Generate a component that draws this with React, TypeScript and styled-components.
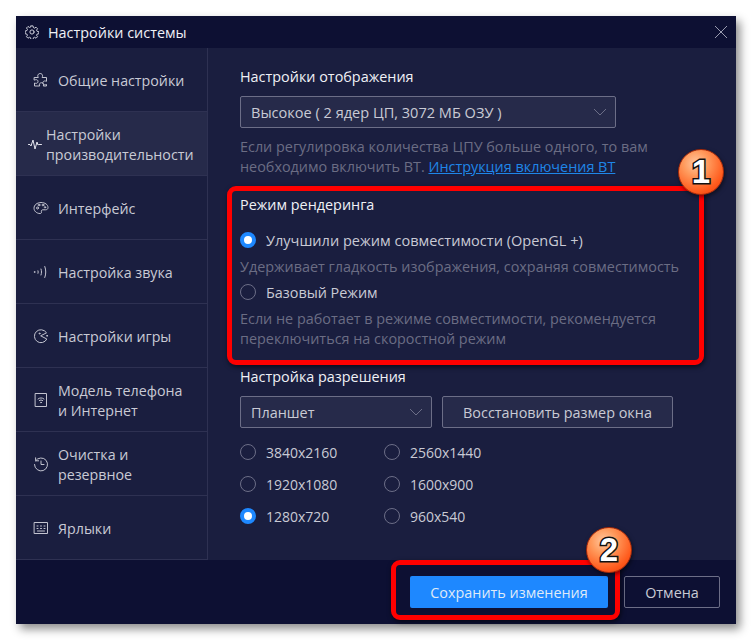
import React from "react";
import styled, { createGlobalStyle } from "styled-components";

const Global = createGlobalStyle`
  html, body { margin: 0; padding: 0; background: #fff; }
  body { font-family: "Open Sans", "Noto Sans", sans-serif; }
  * { box-sizing: border-box; }
`;

const Page = styled.div`
  position: relative;
  width: 752px;
  height: 640px;
  padding: 16px;
  overflow: hidden;
  background: #fff;
`;
const Win = styled.div`
  width: 720px;
  height: 608px;
  display: flex;
  flex-direction: column;
  background: #1a1e3f;
  box-shadow: 4px 5px 9px rgba(0, 0, 0, 0.45);
`;
const TitleBar = styled.div`
  height: 32px;
  flex: none;
  display: flex;
  align-items: center;
  padding: 0 9px;
  gap: 9px;
  background: #0d1033;
  color: #f0f1f6;
  font-size: 14.4px;
`;
const TitleText = styled.span`
  flex: 1;
`;
const Body = styled.div`
  flex: 1;
  display: flex;
  min-height: 0;
`;
const Side = styled.div`
  width: 192px;
  flex: none;
  border-right: 1px solid #2e3152;
  display: flex;
  flex-direction: column;
`;
const NavItem = styled.div<{ $active?: boolean; $tight?: boolean }>`
  height: 64px;
  flex: none;
  display: flex;
  align-items: center;
  gap: ${(p) => (p.$tight ? "3px" : "9px")};
  padding-left: ${(p) => (p.$tight ? "11px" : "17px")};
  border-bottom: 1px solid #2e3152;
  background: ${(p) => (p.$active ? "#262a4a" : "transparent")};
  color: #c9cad5;
  font-size: 14.25px;
  line-height: 20px;
  svg { flex: none; }
`;
const NavLabel = styled.span`
  display: block;
  padding-top: 2px;
`;
const Main = styled.div`
  flex: 1;
  padding: 19px 0 0 32px;
  display: flex;
  flex-direction: column;
  align-items: flex-start;
`;
const H = styled.div<{ $mt?: number }>`
  font-size: 14.4px;
  line-height: 20px;
  color: #f0f1f6;
  margin-top: ${(p) => p.$mt ?? 0}px;
`;
const Select = styled.div<{ $w: number; $mt?: number; $fs?: number }>`
  width: ${(p) => p.$w}px;
  height: 32px;
  flex: none;
  margin-top: ${(p) => p.$mt ?? 0}px;
  display: flex;
  align-items: center;
  justify-content: space-between;
  padding: 0 8px 0 10px;
  background: #262a4a;
  border: 1px solid #6c6e87;
  border-radius: 2px;
  color: #c9cad5;
  font-size: ${(p) => p.$fs ?? 14.4}px;
`;
const Hint = styled.div<{ $mt?: number }>`
  font-size: 14.4px;
  line-height: 20px;
  color: #6b6d84;
  margin-top: ${(p) => p.$mt ?? 0}px;
  white-space: nowrap;
`;
const DocLink = styled.a`
  color: #1f86e8;
  text-decoration: underline;
`;
const RadioRow = styled.div<{ $mt?: number; $fs?: number }>`
  display: flex;
  align-items: center;
  gap: 10px;
  height: 20px;
  margin-top: ${(p) => p.$mt ?? 0}px;
  color: #c9cad5;
  font-size: ${(p) => p.$fs ?? 14.4}px;
  white-space: nowrap;
`;
const Dot = styled.span<{ $on?: boolean }>`
  width: 16px;
  height: 16px;
  flex: none;
  border-radius: 50%;
  ${(p) =>
    p.$on
      ? "background:#fff;border:4px solid #1e88ff;"
      : "border:1px solid #6c6e87;"}
`;
const Row = styled.div`
  display: flex;
  gap: 10px;
  margin-top: 9px;
`;
const RestoreBtn = styled.div`
  width: 231px;
  height: 32px;
  display: flex;
  align-items: center;
  justify-content: center;
  background: #262a4a;
  border: 1px solid #6c6e87;
  border-radius: 2px;
  color: #c9cad5;
  font-size: 14.4px;
`;
const ResGrid = styled.div`
  display: grid;
  grid-template-columns: 144px 144px;
  grid-auto-rows: 20px;
  row-gap: 12px;
  margin-top: 14px;
`;
const Footer = styled.div`
  height: 64px;
  flex: none;
  background: #0d1033;
  display: flex;
  align-items: center;
  justify-content: flex-end;
  gap: 16px;
  padding-right: 16px;
`;
const Save = styled.div`
  width: 198px;
  height: 32px;
  display: flex;
  align-items: center;
  justify-content: center;
  background: #1e88ff;
  border-radius: 2px;
  color: #dfeaf8;
  font-size: 14.4px;
`;
const Cancel = styled.div`
  width: 96px;
  height: 32px;
  display: flex;
  align-items: center;
  justify-content: center;
  border: 1px solid #6c6e87;
  border-radius: 2px;
  color: #c9cad5;
  font-size: 14.4px;
`;
const RedBox = styled.div<{ $x: number; $y: number; $w: number; $h: number }>`
  position: absolute;
  left: ${(p) => p.$x}px;
  top: ${(p) => p.$y}px;
  width: ${(p) => p.$w}px;
  height: ${(p) => p.$h}px;
  border: 5px solid #ff0000;
  border-radius: 9px;
  box-shadow: 1px 2px 5px rgba(0, 0, 0, 0.6);
`;
const Badge = styled.div<{ $x: number; $y: number }>`
  position: absolute;
  left: ${(p) => p.$x}px;
  top: ${(p) => p.$y}px;
  width: 46px;
  height: 46px;
  border-radius: 50%;
  border: 1px solid #a82a08;
  background: radial-gradient(circle at 38% 30%, #ffc7a0 0%, #ff9a5c 30%, #ff5a1c 70%, #e83a08 100%);
  box-shadow: 1px 2px 4px rgba(0, 0, 0, 0.5);
  display: flex;
  align-items: center;
  justify-content: center;
  font-family: "Liberation Sans", sans-serif;
  font-weight: 700;
  font-size: 33px;
  color: #fff;
  -webkit-text-stroke: 3px #111;
  paint-order: stroke fill;
`;

const Svg = (p: { children: React.ReactNode; s?: number; c?: string }) => (
  <svg width={p.s ?? 16} height={p.s ?? 16} viewBox="0 0 16 16" fill="none" stroke={p.c ?? "#c3c4d0"} strokeWidth="1" strokeLinecap="round" strokeLinejoin="round">
    {p.children}
  </svg>
);
const Gear = () => (
  <Svg s={14} c="#e4e5ee">
    <circle cx="8" cy="8" r="2.4" />
    <path d="M6.8 1h2.4l.4 2 1.3.6 1.700-1.100 1.700 1.700-1.100 1.700.6 1.300 2 .4v2.400l-2 .4-.6 1.300 1.100 1.700-1.700 1.700-1.700-1.100-1.300.6-.4 2H6.800l-.4-2-1.300-.6-1.700 1.100-1.700-1.700 1.100-1.700-.6-1.300-2-.4V6.800l2-.4.6-1.300-1.100-1.700 1.700-1.700 1.700 1.100 1.300-.6z" />
  </Svg>
);
const Puzzle = () => (
  <Svg>
    <path d="M1.500 5.500h3.800l-.5-1.300C4.400 2.800 5.800 1.500 7.200 1.500c1.500 0 2.700 1.300 2.300 2.800l-.4 1.200h4.400v3.800l-1.200-.3c-1.300-.3-2.500.6-2.500 1.900s1.200 2.200 2.500 1.900l1.200-.3v1.500H10.300l.3-1c.3-1.200-.7-2.300-2.100-2.300s-2.400 1.100-2.100 2.300l.3 1H1.500V11l1.200.3C4 11.600 5 10.700 5 9.500S4 7.400 2.700 7.700L1.500 8z" />
  </Svg>
);
const Pulse = () => (
  <Svg s={16} c="#e4e5ee">
    <path d="M1.500 8.500h1.500l1 1.500 2-6 2 9 2-7 1 3 .7-.5H14.500" />
  </Svg>
);
const Palette = () => (
  <Svg>
    <path d="M8 2.500C4 2.500 1 5 1 8.200c0 3 2.800 5.300 6 5.300 1.300 0 1.700-.8 1.400-1.700-.4-1 .2-2 1.400-2h2.700c1.500 0 2.500-.8 2.500-2.200 0-3-3-5.100-6.500-5.100z" />
    <circle cx="4.500" cy="8" r="1" />
    <circle cx="6" cy="5" r=".9" />
    <circle cx="10" cy="5" r=".9" />
    <circle cx="12" cy="7.300" r=".7" />
  </Svg>
);
const Sound = () => (
  <Svg>
    <circle cx="1.500" cy="8" r=".4" />
    <path d="M5 6.800c.3.800.3 1.700 0 2.500" />
    <path d="M8 5c.7 2 .7 4 0 6" />
    <path d="M11.800 2.500c1.300 3.500 1.300 7.500 0 11" />
  </Svg>
);
const Game = () => (
  <Svg>
    <path d="M13.300 4.500A6.500 6.500 0 1 0 13.800 11L8 8z" />
    <circle cx="6.500" cy="5.500" r=".5" />
    <circle cx="14" cy="7.800" r=".5" />
  </Svg>
);
const Phone = () => (
  <Svg>
    <rect x="2.500" y="1.500" width="11" height="13" />
    <path d="M5 7c1.800-1.500 4.200-1.500 6 0" />
    <path d="M6.300 8.600c1-.8 2.400-.8 3.400 0" />
    <circle cx="8" cy="10.500" r=".4" />
  </Svg>
);
const Hist = () => (
  <Svg>
    <path d="M2.600 4.800A6.500 6.500 0 1 1 1.500 8.500" />
    <path d="M2.600 1.800v3h3" />
    <path d="M8 5v3.500h3" />
  </Svg>
);
const Keys = () => (
  <Svg>
    <rect x="1.500" y="2.500" width="13" height="11" />
    <path d="M4 6h1M7.500 6h1M11 6h1M4 8.500h1M7.500 8.500h1M11 8.500h1M4.500 11h7" />
  </Svg>
);
const Chevron = () => (
  <svg width="14" height="8" viewBox="0 0 14 8" fill="none" stroke="#6c6e87" strokeWidth="1">
    <path d="M1 1l6 6 6-6" />
  </svg>
);
const CloseX = () => (
  <svg width="12" height="12" viewBox="0 0 12 12" fill="none" stroke="#9a9cb0" strokeWidth="1">
    <path d="M0 0l12 12M12 0L0 12" />
  </svg>
);

const nav: { icon: React.ReactNode; label: React.ReactNode; active?: boolean; tight?: boolean }[] = [
  { icon: <Puzzle />, label: "Общие настройки" },
  { icon: <Pulse />, label: <>Настройки<br />производительности</>, active: true, tight: true },
  { icon: <Palette />, label: "Интерфейс" },
  { icon: <Sound />, label: "Настройка звука" },
  { icon: <Game />, label: "Настройки игры" },
  { icon: <Phone />, label: <>Модель телефона<br />и Интернет</> },
  { icon: <Hist />, label: <>Очистка и<br />резервное</> },
  { icon: <Keys />, label: "Ярлыки" },
];
const res = [
  ["3840x2160", false],
  ["2560x1440", false],
  ["1920x1080", false],
  ["1600x900", false],
  ["1280x720", true],
  ["960x540", false],
] as const;

export default function App() {
  return (
    <Page>
      <Global />
      <Win>
        <TitleBar>
          <Gear />
          <TitleText>Настройки системы</TitleText>
          <CloseX />
        </TitleBar>
        <Body>
          <Side>
            {nav.map((n, i) => (
              <NavItem key={i} $active={n.active} $tight={n.tight}>
                {n.icon}
                <NavLabel>{n.label}</NavLabel>
              </NavItem>
            ))}
          </Side>
          <Main>
            <H>Настройки отображения</H>
            <Select $w={376} $mt={9} $fs={14.55}>
              Высокое ( 2 ядер ЦП, 3072 МБ ОЗУ )
              <Chevron />
            </Select>
            <Hint $mt={9}>Если регулировка количества ЦПУ больше одного, то вам</Hint>
            <Hint>
              необходимо включить ВТ. <DocLink>Инструкция включения ВТ</DocLink>
            </Hint>
            <H $mt={18}>Режим рендеринга</H>
            <RadioRow $mt={15} $fs={14.55}>
              <Dot $on />
              Улучшили режим совместимости (OpenGL +)
            </RadioRow>
            <Hint $mt={7}>Удерживает гладкость изображения, сохраняя совместимость</Hint>
            <RadioRow $mt={5}>
              <Dot />
              Базовый Режим
            </RadioRow>
            <Hint $mt={7}>Если не работает в режиме совместимости, рекомендуется</Hint>
            <Hint>переключиться на скоростной режим</Hint>
            <H $mt={18}>Настройка разрешения</H>
            <Row>
              <Select $w={192}>
                Планшет
                <Chevron />
              </Select>
              <RestoreBtn>Восстановить размер окна</RestoreBtn>
            </Row>
            <ResGrid>
              {res.map(([t, on]) => (
                <RadioRow key={t} $fs={14}>
                  <Dot $on={on} />
                  {t}
                </RadioRow>
              ))}
            </ResGrid>
          </Main>
        </Body>
        <Footer>
          <Save>Сохранить изменения</Save>
          <Cancel>Отмена</Cancel>
        </Footer>
      </Win>
      <RedBox $x={227} $y={186} $w={477} $h={179} />
      <RedBox $x={391} $y={560} $w={229} $h={60} />
      <Badge $x={678} $y={149}>1</Badge>
      <Badge $x={586} $y={527}>2</Badge>
    </Page>
  );
}
